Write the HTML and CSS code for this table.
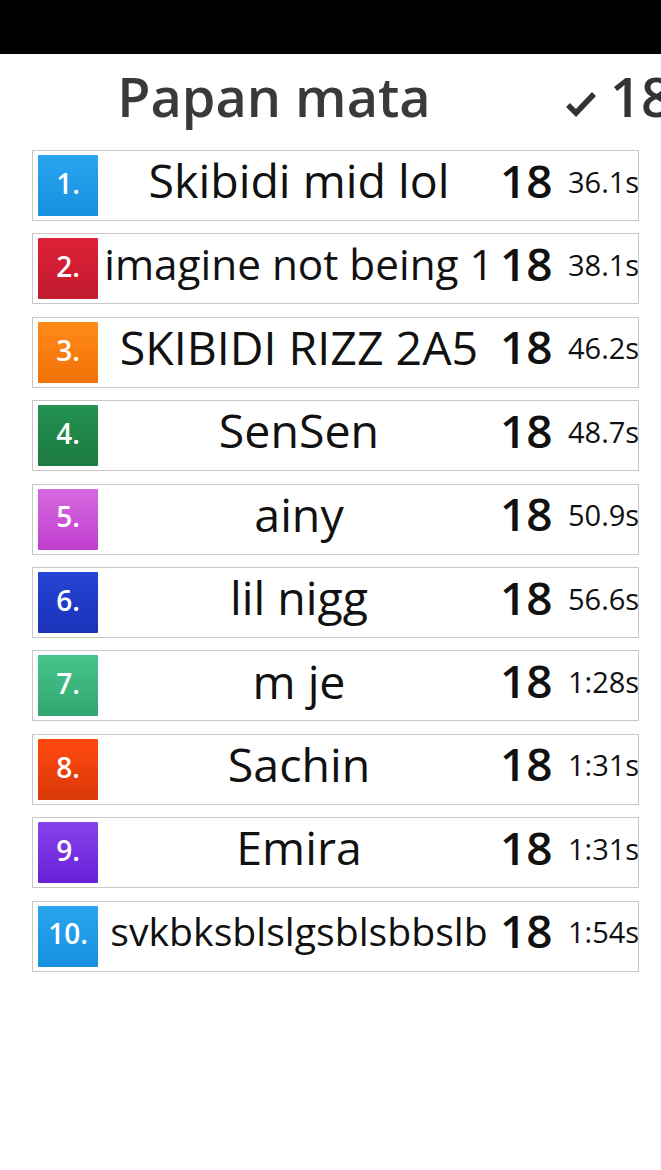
FILE: index.html
```html
<!DOCTYPE html>
<html>
<head>
<meta charset="utf-8">
<link rel="stylesheet" href="styles.css">
</head>
<body>
<div class="topbar"></div>
<div class="page">
  <div class="header">
    <div class="title">Papan mata</div>
    <div class="score">
      <svg class="check" width="34" height="28" viewBox="0 0 34 28"><path d="M4 15 L12 23 L30 4" fill="none" stroke="#333" stroke-width="5.5" stroke-linejoin="miter"/></svg>
      <span>18</span>
    </div>
  </div>
  <div class="list">
    <div class="row"><div class="badge b1">1.</div><div class="name">Skibidi mid lol</div><div class="pts">18</div><div class="time">36.1s</div></div>
    <div class="row"><div class="badge b2">2.</div><div class="name fit-a">imagine not being 1</div><div class="pts">18</div><div class="time">38.1s</div></div>
    <div class="row"><div class="badge b3">3.</div><div class="name">SKIBIDI RIZZ 2A5</div><div class="pts">18</div><div class="time">46.2s</div></div>
    <div class="row"><div class="badge b4">4.</div><div class="name">SenSen</div><div class="pts">18</div><div class="time">48.7s</div></div>
    <div class="row"><div class="badge b5">5.</div><div class="name">ainy</div><div class="pts">18</div><div class="time">50.9s</div></div>
    <div class="row"><div class="badge b6">6.</div><div class="name">lil nigg</div><div class="pts">18</div><div class="time">56.6s</div></div>
    <div class="row"><div class="badge b7">7.</div><div class="name">m je</div><div class="pts">18</div><div class="time">1:28s</div></div>
    <div class="row"><div class="badge b8">8.</div><div class="name">Sachin</div><div class="pts">18</div><div class="time">1:31s</div></div>
    <div class="row"><div class="badge b9">9.</div><div class="name">Emira</div><div class="pts">18</div><div class="time">1:31s</div></div>
    <div class="row"><div class="badge b10">10.</div><div class="name fit-b">svkbksblslgsblsbbslb</div><div class="pts">18</div><div class="time">1:54s</div></div>
  </div>
</div>
</body>
</html>
```

FILE: styles.css
```css
html, body {
  margin: 0;
  padding: 0;
  background: #fff;
  overflow: hidden;
  width: 661px;
  height: 1170px;
  font-family: "Open Sans", "Noto Sans", sans-serif;
  color: #111;
}
.topbar {
  height: 54px;
  background: #000;
}
.page {
  padding: 0 22px 0 32px;
}
.header {
  display: flex;
  align-items: center;
  height: 88px;
  white-space: nowrap;
}
.title {
  flex: none;
  width: 484px;
  text-align: center;
  font-size: 54px;
  font-weight: 600;
  color: #3a3a3a;
  line-height: 1.3;
  margin-top: -3px;
}
.score {
  flex: none;
  display: flex;
  align-items: center;
  gap: 12px;
  margin-left: 48px;
  font-size: 54px;
  font-weight: 600;
  color: #333;
  line-height: 1.3;
  margin-top: -3px;
}
.check {
  margin-top: 14px;
}
.list {
  margin-top: 8px;
  display: flex;
  flex-direction: column;
  gap: 12.4px;
}
.row {
  display: flex;
  align-items: center;
  border: 1px solid #c8c8c8;
  box-sizing: border-box;
  height: 71px;
  padding: 0 0 0 5px;
  white-space: nowrap;
}
.badge {
  width: 60px;
  height: 61px;
  flex: none;
  display: flex;
  align-items: center;
  justify-content: center;
  box-sizing: border-box;
  padding-bottom: 5px;
  color: #fff;
  font-size: 28px;
  font-weight: 600;
  line-height: 1.3;
  border-radius: 1px;
}
.b1 { background: linear-gradient(#2aa5ef, #1790e0); }
.b2 { background: linear-gradient(#df2138, #c01a2e); }
.b3 { background: linear-gradient(#ff8a18, #f27208); }
.b4 { background: linear-gradient(#249250, #1c7a40); }
.b5 { background: linear-gradient(#d569df, #c13fcf); }
.b6 { background: linear-gradient(#2744d6, #1a32b8); }
.b7 { background: linear-gradient(#46c48b, #31a670); }
.b8 { background: linear-gradient(#ff4a10, #d93808); }
.b9 { background: linear-gradient(#8743ea, #6a20d8); }
.b10 { background: linear-gradient(#2aa5ef, #1790e0); }
.name, .pts, .time {
  line-height: 1.3;
  margin-bottom: 10px;
}
.name {
  flex: 1;
  min-width: 0;
  text-align: center;
  font-size: 46.5px;
  color: #111;
}
.name.fit-a { font-size: 42.3px; }
.name.fit-b { font-size: 39.2px; }
.pts {
  flex: none;
  width: 68px;
  font-size: 46px;
  font-weight: 600;
}
.time {
  flex: none;
  width: 70px;
  text-align: right;
  font-size: 29px;
  margin-bottom: 8px;
}
```
